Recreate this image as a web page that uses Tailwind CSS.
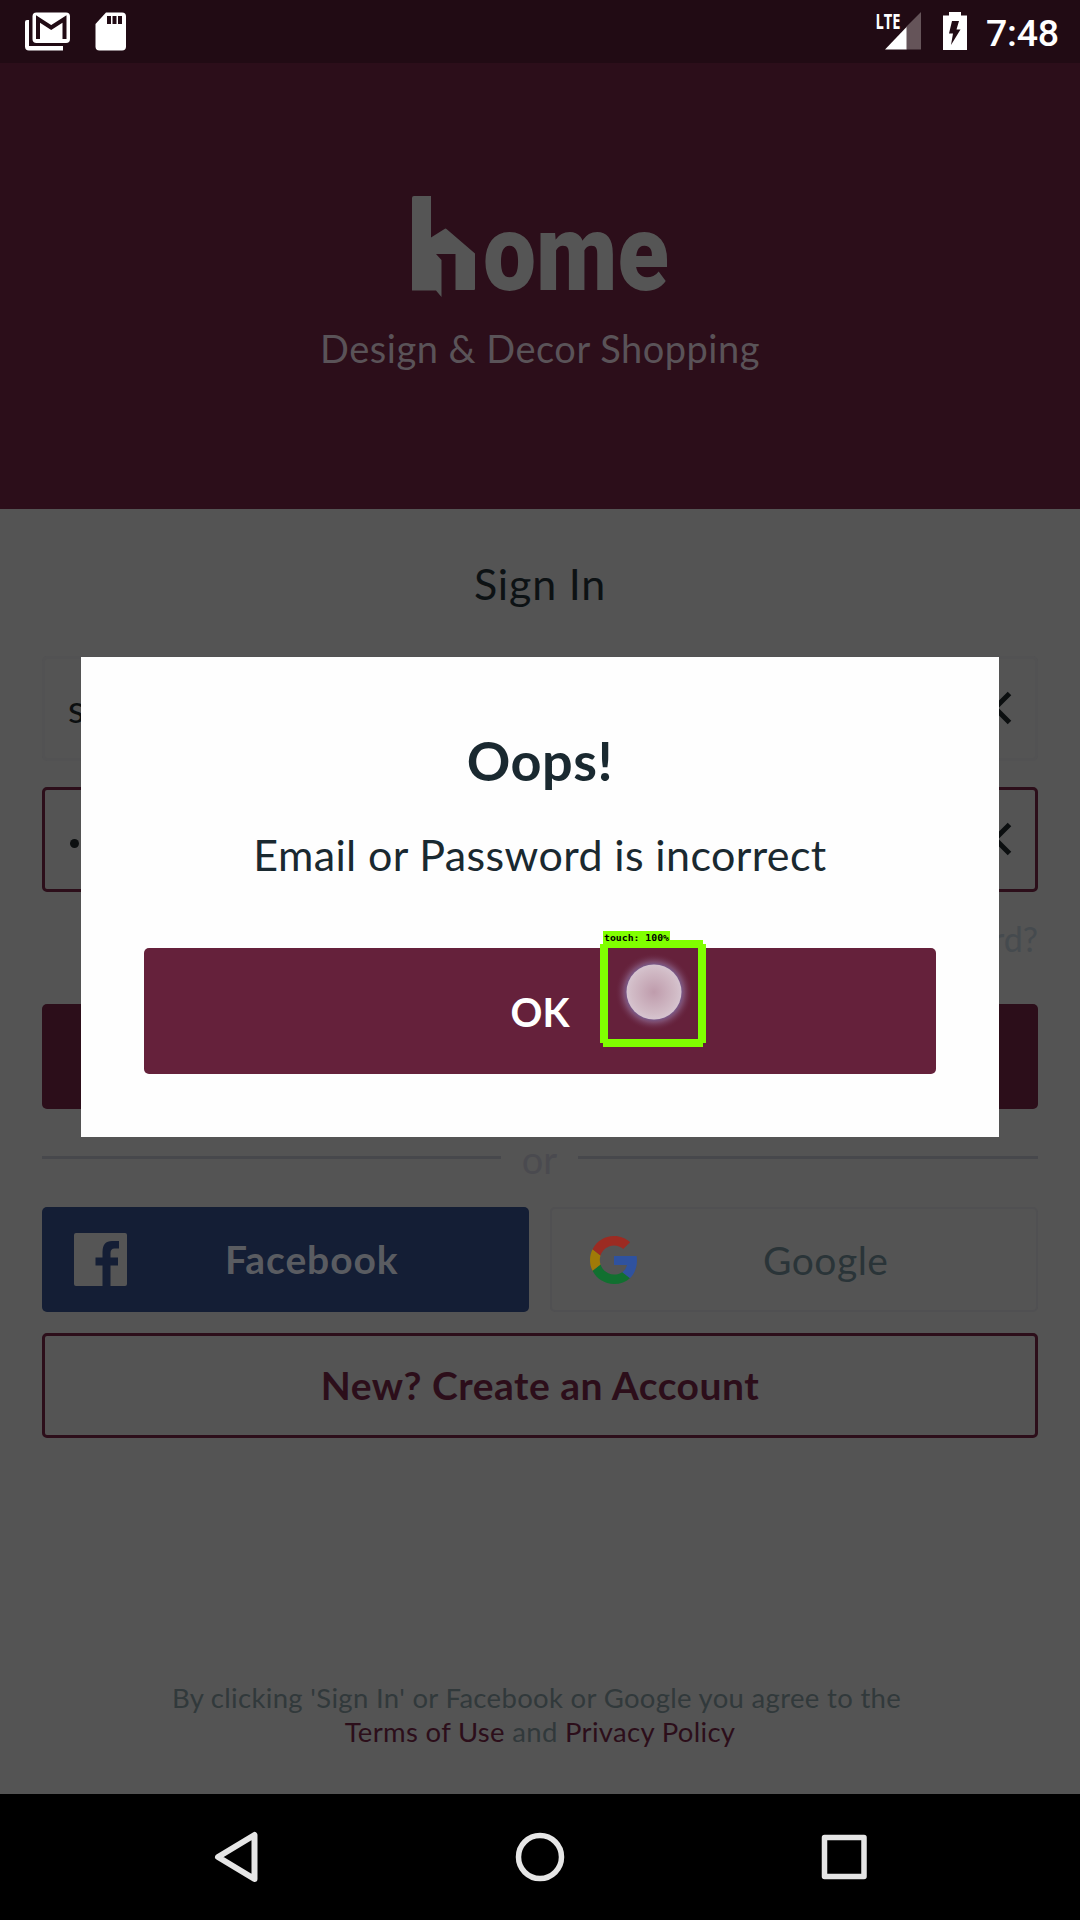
<!DOCTYPE html>
<html lang="en">
<head>
<meta charset="utf-8">
<title>Sign In</title>
<script src="https://cdn.jsdelivr.net/npm/@tailwindcss/browser@4"></script>
</head>
<body class="w-[1080px] h-[1920px] overflow-hidden bg-black font-['Lato',sans-serif]">
<div class="relative flex flex-col w-[1080px] h-[1920px] overflow-hidden bg-[#545454]">

  <!-- status bar -->
  <div class="h-[63px] shrink-0 bg-[#210b14]">
    <svg class="block" width="1080" height="63" viewBox="0 0 1080 63" fill="#fff">
      <path d="M25 22q0-2 2-2h2v26h34v4.500H29q-4 0-4-4z"/>
      <rect x="32.500" y="12.500" width="37.500" height="30.500" rx="4"/>
      <path d="M38 39V19l13.200 8.500L64.500 19v20" fill="none" stroke="#210b14" stroke-width="4"/>
      <path d="M106 12.500h16q4 0 4 4v30q0 4-4 4H99.500q-4 0-4-4V24z"/>
      <path d="M107 16h4v8h-4zm5.500 0h4v8h-4zm5.500 0h4v8h-4z" fill="#210b14"/>
      <path d="M921 12v37.500h-15V27z" fill="#655459"/>
      <path d="M906.500 27v22.500H885z"/>
      <text x="875.500" y="29" font-family="Open Sans" font-weight="700" font-size="22" textLength="25" lengthAdjust="spacingAndGlyphs">LTE</text>
      <path d="M949 12h12v3.500h6V50h-24V15.500h6z"/>
      <path d="M952 21h7l-2.500 8.500h4L951 45l2-11.500h-4z" fill="#210b14"/>
      <text x="986" y="46" font-family="Roboto" font-weight="500" font-size="37.500" textLength="73">7:48</text>
    </svg>
  </div>

  <!-- brand header -->
  <header class="h-[446px] shrink-0 bg-[#2c0e1a] flex flex-col items-center pt-[129px] text-[#5a5358]">
    <svg class="block overflow-visible" width="258" height="110" viewBox="0 0 258 110" fill="#555">
      <path d="M1 6q0-2 2-2h17v41.500L33.500 37q1-1 2 0L64 61.500V97q0 1-1 1H44.500V62H25l5.500 6v37L25 98.500H1z"/>
      <text x="72" y="98" font-family="Roboto" font-weight="900" font-size="107" textLength="186" lengthAdjust="spacingAndGlyphs">ome</text>
    </svg>
    <p class="mt-[22px] h-[48px] leading-[48px] text-[38px] tracking-[0.5px] whitespace-nowrap">Design &amp; Decor Shopping</p>
  </header>

  <main class="flex flex-col flex-1 px-[42px] pt-[51px]">
    <h1 class="h-[48px] leading-[48px] text-center text-[43px] tracking-[0.8px] text-[#0d1214]">Sign In</h1>

    <div class="mt-[48px] h-[105px] rounded-[5px] border-3 border-[#525253] flex items-center justify-between pl-[23px] pr-[22px] text-[38px] text-[#0c0f10]">
      <span>s</span>
      <svg class="mb-[2px]" width="36" height="36" viewBox="0 0 36 36" stroke="#0c0f10" stroke-width="5"><path d="M3.500 3.500l29 29M32.500 3.500l-29 29"/></svg>
    </div>

    <div class="mt-[26px] h-[105px] rounded-[5px] border-3 border-[#2c0e1a] flex items-center justify-between pl-[25px] pr-[22px]">
      <span class="mt-[8px] size-[9px] rounded-full bg-[#0c0f10]"></span>
      <svg class="mb-[1px]" width="36" height="36" viewBox="0 0 36 36" stroke="#0c0f10" stroke-width="5"><path d="M3.500 3.500l29 29M32.500 3.500l-29 29"/></svg>
    </div>

    <a class="mt-[24px] h-[46px] leading-[46px] text-right text-[34px] text-[#454a4e]">Forgot password?</a>

    <button class="mt-[42px] h-[105px] shrink-0 rounded-[5px] bg-[#2c0e1a]"></button>

    <div class="mt-[23px] h-[52px] flex justify-between text-[#4a4a4f]">
      <span class="mt-[24px] w-[459px] h-[3px] bg-[#47484c]"></span>
      <span class="leading-[54px] text-[38px]">or</span>
      <span class="mt-[24px] w-[460px] h-[3px] bg-[#47484c]"></span>
    </div>

    <div class="mt-[23px] flex gap-[21px]">
      <button class="w-[487px] h-[105px] rounded-[5px] bg-[#141e35] flex items-center pl-[32px] font-bold text-[39px] tracking-[0.9px] text-[#5a5c61]">
        <svg class="block shrink-0" width="53" height="53" viewBox="0 0 53 53"><path d="M2 0h49q2 0 2 2v49q0 2-2 2H36.500V32.500H44V24.500h-7.500V20q0-4.500 4-4.500H45V8h-7q-9.500 0-9.500 11v5.500H21.500v8h7V53H2q-2 0-2-2V2q0-2 2-2z" fill="#555"/></svg>
        <span class="ml-[98px]">Facebook</span>
      </button>
      <button class="w-[488px] h-[105px] rounded-[5px] border-2 border-[#505052] flex items-center pl-[38px] text-[39px] tracking-[0.5px] text-[#2a3438]">
        <svg class="block shrink-0" width="47" height="48" viewBox="0 0 47 48">
          <path class="fill-[#2f529f]" d="M46.980 24.550c0-1.570-.15-3.090-.38-4.550H24v9.020h12.940c-.58 2.960-2.260 5.480-4.780 7.180l7.730 6c4.510-4.180 7.090-10.360 7.090-17.650z"/>
          <path class="fill-[#117030]" d="M24 48c6.480 0 11.930-2.130 15.890-5.810l-7.730-6c-2.150 1.450-4.920 2.300-8.160 2.300-6.260 0-11.570-4.220-13.470-9.910l-7.980 6.190C6.510 42.620 14.620 48 24 48z"/>
          <path class="fill-[#a07a08]" d="M10.530 28.590c-.48-1.450-.76-2.990-.76-4.590s.27-3.140.76-4.590l-7.980-6.190C.92 16.460 0 20.120 0 24c0 3.880.92 7.540 2.560 10.780z"/>
          <path class="fill-[#9c2b22]" d="M24 9.500c3.540 0 6.710 1.220 9.210 3.600l6.850-6.850C35.900 2.380 30.470 0 24 0 14.620 0 6.510 5.380 2.560 13.220l7.980 6.190C12.430 13.720 17.740 9.500 24 9.500z"/>
        </svg>
        <span class="ml-[126px] mt-[2px]">Google</span>
      </button>
    </div>

    <button class="mt-[21px] h-[105px] pb-[1px] rounded-[5px] border-3 border-[#2c0e1a] font-bold text-[39px] tracking-[0.5px] text-[#2c0e1a]">New? Create an Account</button>

    <p class="mt-[243px] text-center text-[27.500px] leading-[34px] tracking-[0.32px] text-[#31393b]">
      <span class="pr-[7px]">By clicking 'Sign In' or Facebook or Google you agree to the</span><br>
      <a class="text-[#2c0e1a]">Terms of Use</a> and <a class="text-[#2c0e1a]">Privacy Policy</a>
    </p>
  </main>

  <!-- navigation bar -->
  <nav class="h-[126px] shrink-0 bg-black">
    <svg class="block" width="1080" height="126" viewBox="0 0 1080 126" fill="none" stroke="#e6e6e6" stroke-linejoin="round">
      <path d="M254.500 41v44L218 63z" stroke-width="6"/>
      <circle cx="540" cy="63" r="21.500" stroke-width="5.500"/>
      <rect x="824.500" y="43.500" width="39.500" height="39" stroke-width="5.500"/>
    </svg>
  </nav>

  <!-- alert dialog -->
  <section class="absolute left-[81px] top-[657px] w-[918px] h-[480px] bg-[#fefefe] px-[63px] flex flex-col items-center text-[#1a2930]">
    <h2 class="mt-[74px] h-[60px] leading-[60px] font-bold text-[54px] tracking-[0.5px]">Oops!</h2>
    <p class="mt-[38px] h-[52px] leading-[52px] text-[43px] tracking-[0.38px] whitespace-nowrap">Email or Password is incorrect</p>
    <button class="mt-[67px] w-full h-[126px] pt-[1px] rounded-[5px] bg-[#65213b] font-bold text-[39.500px] text-white">OK</button>
  </section>

  <!-- touch marker -->
  <svg class="absolute left-[600px] top-[931px]" width="107" height="117" viewBox="0 0 107 117">
    <defs>
      <radialGradient id="glow"><stop offset=".66" stop-color="#7564a0"/><stop offset=".78" stop-color="#8a6288" stop-opacity=".6"/><stop offset="1" stop-color="#65213b" stop-opacity="0"/></radialGradient>
      <radialGradient id="dot"><stop offset="0" stop-color="#bf9cac"/><stop offset=".8" stop-color="#d1bbc6"/><stop offset="1" stop-color="#d6c4cf"/></radialGradient>
    </defs>
    <circle cx="54" cy="61" r="39" fill="url(#glow)"/>
    <circle cx="54" cy="61" r="27.500" fill="url(#dot)"/>
    <path fill="#80ff00" fill-rule="evenodd" d="M3 0h67v9h33v4h3v99h-3v4H3v-4H0V13h3zM8 17v91h90V17z"/>
    <text x="4" y="10" font-family="DejaVu Sans Mono" font-weight="700" font-size="9.500" textLength="65" lengthAdjust="spacingAndGlyphs">touch: 100%</text>
  </svg>
</div>
</body>
</html>
